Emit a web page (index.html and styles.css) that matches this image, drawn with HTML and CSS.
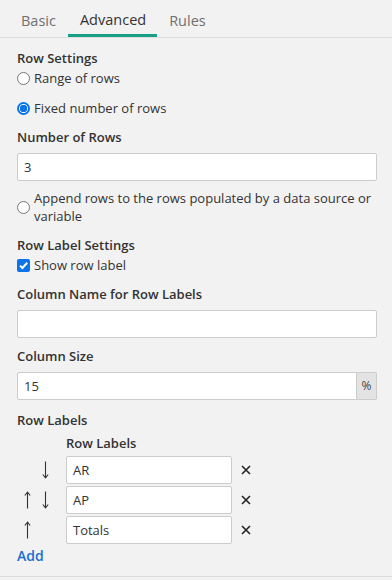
FILE: index.html
```html
<!DOCTYPE html>
<html>
<head>
<meta charset="utf-8">
<link rel="stylesheet" href="styles.css">
</head>
<body>
<div class="panel">
  <div class="tabs">
    <div class="tab">Basic</div>
    <div class="tab active">Advanced</div>
    <div class="tab">Rules</div>
  </div>
  <div class="content">
    <div class="label">Row Settings</div>
    <label class="opt"><span class="radio"></span>Range of rows</label>
    <label class="opt opt2"><span class="radio on"></span>Fixed number of rows</label>
    <div class="label l-num">Number of Rows</div>
    <div class="input">3</div>
    <label class="opt wrap"><span class="radio"></span><span>Append rows to the rows populated by a data source or variable</span></label>
    <div class="label l-rls">Row Label Settings</div>
    <label class="opt"><span class="check"><svg width="13" height="13" viewBox="0 0 13 13"><path d="M3 6.6 L5.4 9 L10.2 3.8" fill="none" stroke="#fff" stroke-width="2"/></svg></span>Show row label</label>
    <div class="label l-cn">Column Name for Row Labels</div>
    <div class="input"></div>
    <div class="label l-cs">Column Size</div>
    <div class="group">
      <div class="input grow">15</div>
      <div class="addon">%</div>
    </div>
    <div class="label l-rl">Row Labels</div>
    <div class="table">
      <div class="thead">Row Labels</div>
      <div class="row">
        <div class="arrows">
          <span class="a"></span>
          <svg class="a" width="7" height="18" viewBox="0 0 7 18"><path d="M3.5 0.5 V16.5 M0.8 13.5 L3.5 16.8 L6.2 13.5" fill="none" stroke="#333" stroke-width="1.1"/></svg>
        </div>
        <div class="input cell">AR</div>
        <svg class="x" width="10" height="10" viewBox="0 0 10 10"><path d="M1 1 L9 9 M9 1 L1 9" stroke="#222" stroke-width="1.6"/></svg>
      </div>
      <div class="row">
        <div class="arrows">
          <svg class="a" width="7" height="18" viewBox="0 0 7 18"><path d="M3.5 17.5 V1.5 M0.8 4.5 L3.5 1.2 L6.2 4.5" fill="none" stroke="#333" stroke-width="1.1"/></svg>
          <svg class="a" width="7" height="18" viewBox="0 0 7 18"><path d="M3.5 0.5 V16.5 M0.8 13.5 L3.5 16.8 L6.2 13.5" fill="none" stroke="#333" stroke-width="1.1"/></svg>
        </div>
        <div class="input cell">AP</div>
        <svg class="x" width="10" height="10" viewBox="0 0 10 10"><path d="M1 1 L9 9 M9 1 L1 9" stroke="#222" stroke-width="1.6"/></svg>
      </div>
      <div class="row">
        <div class="arrows">
          <svg class="a" width="7" height="18" viewBox="0 0 7 18"><path d="M3.5 17.5 V1.5 M0.8 4.5 L3.5 1.2 L6.2 4.5" fill="none" stroke="#333" stroke-width="1.1"/></svg>
          <span class="a"></span>
        </div>
        <div class="input cell">Totals</div>
        <svg class="x" width="10" height="10" viewBox="0 0 10 10"><path d="M1 1 L9 9 M9 1 L1 9" stroke="#222" stroke-width="1.6"/></svg>
      </div>
    </div>
    <div class="add">Add</div>
  </div>
</div>
</body>
</html>
```
FILE: styles.css
```css
html, body {
  margin: 0;
  padding: 0;
  background: #f2f2f2;
}
body {
  font-family: "Open Sans", "Liberation Sans", sans-serif;
  font-size: 13px;
  color: #333;
  width: 392px;
  height: 580px;
  overflow: hidden;
}
.panel {
  height: 577px;
  border-bottom: 1px solid #dcdcdc;
  box-sizing: border-box;
}
.tabs {
  display: flex;
  height: 38px;
  border-bottom: 1px solid #dedede;
  padding-left: 9px;
  box-sizing: border-box;
}
.tab {
  font-size: 14.5px;
  color: #707070;
  padding: 0 12px;
  line-height: 41px;
  height: 37px;
  box-sizing: border-box;
  margin-right: 0;
}
.tab.active {
  color: #333;
  border-bottom: 3px solid #17a085;
  padding: 0 11px 0 12px;
  line-height: 39px;
}
.content {
  padding: 11px 15px 0 17px;
}
.label {
  font-weight: 600;
  line-height: 18px;
}
.opt {
  display: flex;
  align-items: center;
  line-height: 18px;
  margin-top: 2px;
}
.opt2 { margin-top: 12px; }
.radio {
  width: 13px;
  height: 13px;
  box-sizing: border-box;
  border: 1px solid #767676;
  border-radius: 50%;
  background: #fff;
  margin-right: 4px;
  flex: none;
}
.radio.on {
  border: 2px solid #0a74e8;
  background: radial-gradient(circle, #0a74e8 0 3.5px, #fff 4px);
}
.check {
  width: 13px;
  height: 13px;
  border-radius: 2px;
  background: #0a74e8;
  margin-right: 4px;
  flex: none;
  display: flex;
}
.l-num { margin-top: 11px; }
.input {
  height: 28px;
  box-sizing: border-box;
  border: 1px solid #cccccc;
  border-radius: 2px;
  background: #fff;
  padding: 0 6px;
  line-height: 26px;
  margin-top: 7px;
}
.wrap {
  margin-top: 8px;
  align-items: center;
}
.wrap span:last-child { line-height: 18px; }
.l-rls { margin-top: 11px; }
.l-cn { margin-top: 11px; }
.l-cs { margin-top: 9px; }
.group {
  display: flex;
  margin-top: 7px;
}
.group .input {
  margin-top: 0;
  flex: 1;
  border-radius: 2px 0 0 2px;
}
.addon {
  width: 20px;
  height: 28px;
  box-sizing: border-box;
  border: 1px solid #cccccc;
  border-left: none;
  background: #e3e3e3;
  border-radius: 0 2px 2px 0;
  font-size: 12px;
  line-height: 26px;
  text-align: center;
  color: #444;
}
.l-rl { margin-top: 11px; }
.table {
  margin-top: 5px;
}
.thead {
  font-weight: 600;
  padding-left: 49px;
  line-height: 18px;
  margin-bottom: 4px;
}
.row {
  display: flex;
  align-items: center;
  margin-bottom: 2px;
}
.arrows {
  width: 49px;
  display: flex;
  align-items: center;
  gap: 11px;
  padding-left: 7px;
  box-sizing: border-box;
}
.a {
  width: 7px;
  height: 18px;
  display: block;
}
.cell {
  width: 166px;
  margin-top: 0;
}
.x {
  margin-left: 9px;
  display: block;
}
.add {
  color: #1a6fd1;
  font-weight: 600;
  font-size: 14px;
  line-height: 20px;
  margin-top: 1px;
}
```
